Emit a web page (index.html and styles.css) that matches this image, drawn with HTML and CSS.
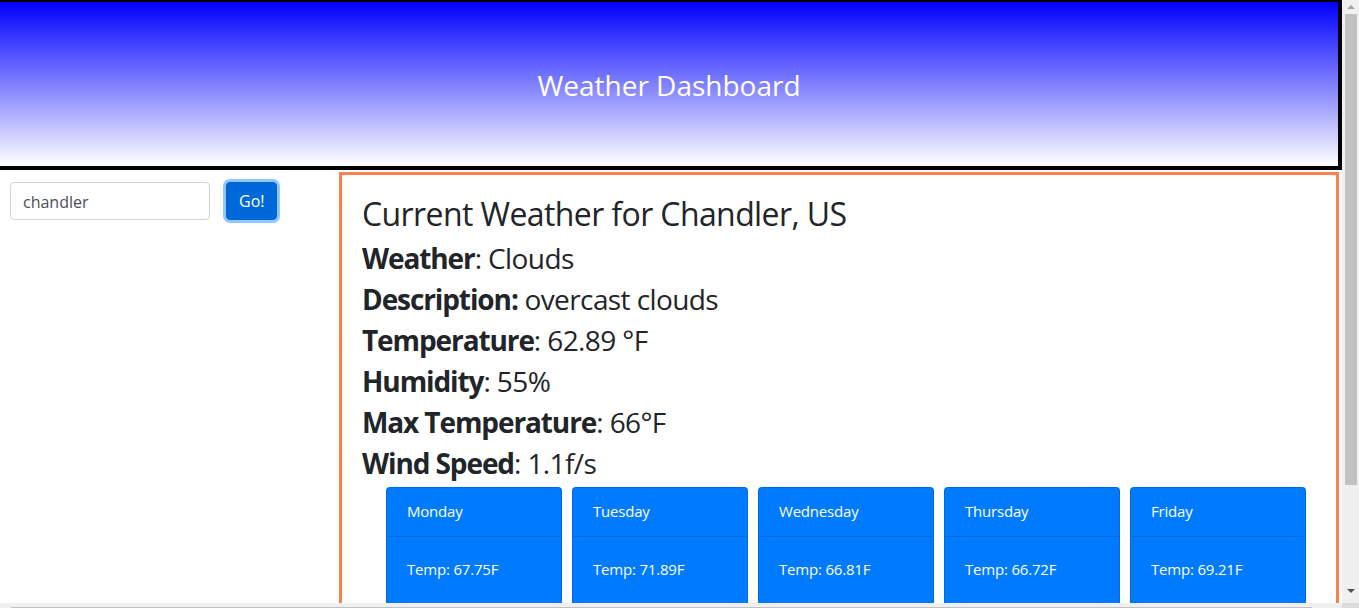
FILE: index.html
```html
<!DOCTYPE html>
<html lang="en">
<head>
<meta charset="utf-8">
<title>Weather Dashboard</title>
<link rel="stylesheet" href="styles.css">
</head>
<body>
<div class="page">
  <header class="hero">
    <h1 class="hero-title">Weather Dashboard</h1>
  </header>
  <div class="layout">
    <aside class="sidebar">
      <input class="search" type="text" value="chandler">
      <button class="go">Go!</button>
    </aside>
    <main class="current">
      <h2 class="current-title">Current Weather for Chandler, US</h2>
      <div class="facts">
        <p class="fact"><b>Weather</b>: Clouds</p>
        <p class="fact"><b>Description:</b> overcast clouds</p>
        <p class="fact"><b>Temperature</b>: 62.89 °F</p>
        <p class="fact"><b>Humidity</b>: 55%</p>
        <p class="fact"><b>Max Temperature</b>: 66°F</p>
        <p class="fact"><b>Wind Speed</b>: 1.1f/s</p>
      </div>
      <div class="forecast">
        <div class="card"><div class="card-header">Monday</div><div class="card-body"><p>Temp: 67.75F</p><p>Feels like: 64F</p></div></div>
        <div class="card"><div class="card-header">Tuesday</div><div class="card-body"><p>Temp: 71.89F</p><p>Feels like: 68F</p></div></div>
        <div class="card"><div class="card-header">Wednesday</div><div class="card-body"><p>Temp: 66.81F</p><p>Feels like: 63F</p></div></div>
        <div class="card"><div class="card-header">Thursday</div><div class="card-body"><p>Temp: 66.72F</p><p>Feels like: 64F</p></div></div>
        <div class="card"><div class="card-header">Friday</div><div class="card-body"><p>Temp: 69.21F</p><p>Feels like</p></div></div>
      </div>
    </main>
  </div>
</div>
<div class="vscroll">
  <div class="arrow-up"></div>
  <div class="vtrack"><div class="vthumb"></div></div>
  <div class="arrow-down"></div>
</div>
<div class="hscroll"><div class="hthumb"></div></div>
<div class="corner"></div>
</body>
</html>
```

FILE: styles.css
```css
* { box-sizing: border-box; }
html, body { margin: 0; padding: 0; }
body {
  width: 1359px;
  height: 608px;
  overflow: hidden;
  display: grid;
  grid-template-columns: 1342px 17px;
  grid-template-rows: 603px 5px;
  font-family: "Open Sans", "Noto Sans", sans-serif;
  color: #212529;
  background: #fff;
}
.page {
  overflow: hidden;
  min-width: 0;
}
.hero {
  height: 170px;
  border-style: solid;
  border-color: #000;
  border-width: 2px 4px 4px 0;
  background: linear-gradient(to bottom, #0000ff 0%, #ffffff 100%);
  display: flex;
  align-items: center;
  justify-content: center;
}
.hero-title {
  margin: 0;
  color: #fff;
  font-weight: 400;
  font-size: 28px;
  line-height: 1.2;
  padding-top: 4px;
}
.layout {
  display: flex;
  margin-top: 2px;
}
.sidebar {
  width: 339px;
  flex: none;
  padding: 10px;
  display: flex;
  align-items: flex-start;
  gap: 16px;
}
.search {
  width: 200px;
  height: 38px;
  border: 1px solid #ced4da;
  border-radius: 4px;
  padding: 7px 12px 5px;
  font-family: inherit;
  font-size: 16px;
  color: #495057;
}
.go {
  height: 38px;
  padding: 6px 12px;
  border: 1px solid #0062cc;
  border-radius: 4px;
  background: #0069d9;
  color: #fff;
  font-family: inherit;
  font-size: 16px;
  box-shadow: 0 0 0 3px rgba(38, 143, 255, 0.5);
}
.current {
  width: 1000px;
  flex: none;
  border: 3px solid #ff7f50;
  border-bottom: none;
  padding: 20px 20px 40px 20px;
  min-height: 500px;
}
.current-title {
  margin: 0 0 11px;
  font-weight: 400;
  font-size: 32px;
  letter-spacing: -0.6px;
  line-height: 38px;
}
.facts {
  display: flex;
  flex-direction: column;
  gap: 12px;
}
.fact {
  margin: 0;
  font-size: 28px;
  letter-spacing: -0.6px;
  line-height: 29px;
}
.fact b {
  font-weight: 700;
  letter-spacing: -1.1px;
}
.forecast {
  display: flex;
  gap: 10px;
  padding-left: 24px;
  margin-top: 9px;
}
.card {
  width: 176px;
  flex: none;
  background: #007bff;
  color: #fff;
  border: 1px solid rgba(0, 0, 0, 0.125);
  border-radius: 4px;
  font-size: 15px;
  letter-spacing: -0.2px;
  line-height: 24px;
}
.card-header {
  padding: 11px 20px 13px;
  border-bottom: 1px solid rgba(0, 0, 0, 0.125);
}
.card-body { padding: 20px; }
.card-body p { margin: 0 0 16px; }
.vscroll {
  background: #f0f0f0;
  display: flex;
  flex-direction: column;
  align-items: center;
}
.arrow-up {
  margin-top: 5px;
  width: 0; height: 0;
  border-left: 4px solid transparent;
  border-right: 4px solid transparent;
  border-bottom: 4px solid #a3a3a3;
}
.vtrack {
  flex: 1;
  width: 100%;
  padding: 5px 2px 0 3px;
}
.vthumb {
  height: 471px;
  background: #c1c1c1;
}
.arrow-down {
  margin-bottom: 10px;
  width: 0; height: 0;
  border-left: 4px solid transparent;
  border-right: 4px solid transparent;
  border-top: 4px solid #505050;
}
.hscroll {
  background: #f0f0f0;
  padding: 4px 30px 0 11px;
}
.hthumb {
  height: 1px;
  background: #c1c1c1;
}
.corner { background: #dcdcdc; }
```
